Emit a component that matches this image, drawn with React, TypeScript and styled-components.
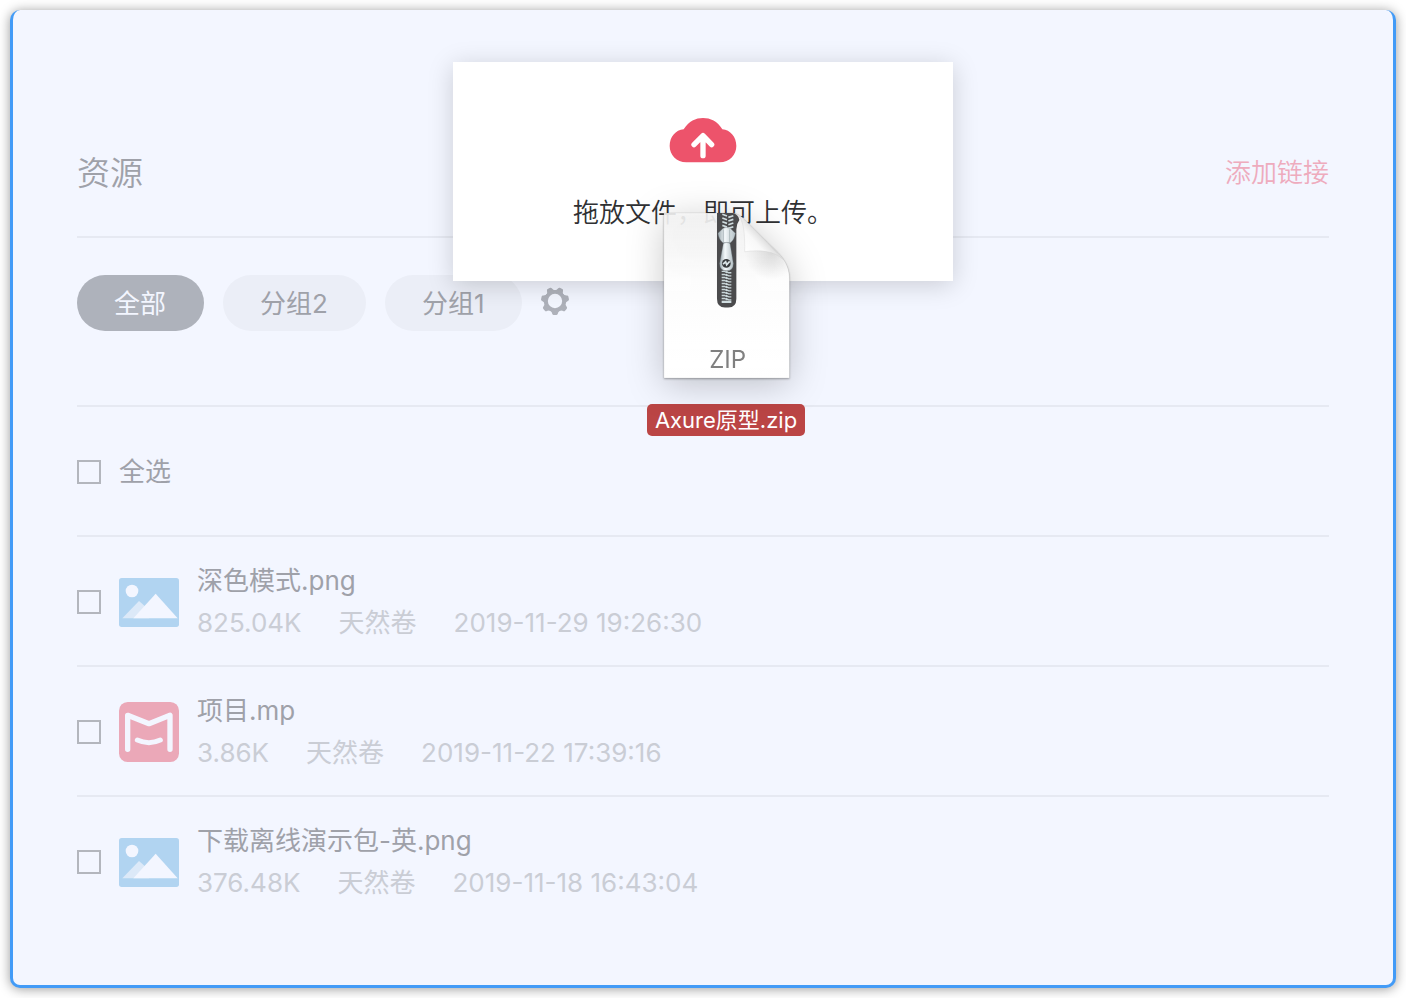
import React from "react";
import styled, { createGlobalStyle } from "styled-components";

const GlobalStyle = createGlobalStyle`
  * { box-sizing: border-box; }
  body {
    margin: 0;
    background: #fff;
    font-family: Inter, "Noto Sans CJK SC", sans-serif;
    font-size: 26px;
    font-weight: 400;
    color: #9fa1a9;
  }
`;

const Page = styled.div`
  padding: 10px;
`;

const DropZone = styled.main`
  position: relative;
  min-height: calc(100vh - 20px);
  padding: 0 64px 40px;
  background: #f3f6ff;
  border: 3px solid #429bf7;
  border-top: 0;
  border-radius: 10px;
  box-shadow: 0 1px 12px rgba(0, 0, 0, 0.4);
`;

const Header = styled.header`
  display: flex;
  align-items: center;
  justify-content: space-between;
  padding: 139px 0 39px;
  border-bottom: 2px solid #e6e9f2;
`;

const Title = styled.h1`
  margin: 0;
  font-size: 33px;
  font-weight: 350;
  line-height: 48px;
`;

const AddLink = styled.a`
  color: #eeabbd;
  font-weight: 350;
  line-height: 48px;
  text-decoration: none;
`;

const Groups = styled.nav`
  display: flex;
  align-items: center;
  gap: 19px;
  padding: 37px 0 74px;
  border-bottom: 2px solid #e6e9f2;
`;

const GroupButton = styled.button<{ $active?: boolean }>`
  height: 56px;
  padding: 0 38px 4px 37px;
  border: 0;
  border-radius: 28px;
  background: ${(p) => (p.$active ? "#aeb2bb" : "#ebeef7")};
  color: ${(p) => (p.$active ? "#f3f6ff" : "#9fa1a9")};
  font: inherit;
`;

const GearButton = styled.button`
  display: flex;
  padding: 0 0 4px;
  border: 0;
  background: none;
`;

const Row = styled.div`
  display: flex;
  align-items: center;
  gap: 18px;
  height: 130px;
  padding-top: 2px;
  border-bottom: 2px solid #e6e9f2;
`;

const List = styled.ul`
  margin: 0;
  padding: 0;
  list-style: none;
`;

const FileRow = styled(Row)`
  &:last-child {
    border-bottom-color: transparent;
  }
`;

const Check = styled.input`
  appearance: none;
  flex: none;
  width: 24px;
  height: 24px;
  margin: 0;
  border: 2px solid #b3b6bd;
  background: transparent;
`;

const CheckLabel = styled.label`
  line-height: 42px;
`;

const FileText = styled.div`
  line-height: 42px;
`;

const FileName = styled.label`
  display: block;
`;

const Meta = styled.div`
  display: flex;
  gap: 37px;
  color: #cacdd5;
`;

const Icon = styled.svg`
  display: block;
  flex: none;
  overflow: visible;
`;

const Dialog = styled.section`
  position: absolute;
  top: 52px;
  left: calc(50% - 250px);
  width: 500px;
  padding: 56px 20px 47px;
  display: flex;
  flex-direction: column;
  align-items: center;
  gap: 29px;
  background: #fff;
  box-shadow: 0 4px 24px rgba(0, 0, 0, 0.17);
`;

const DialogText = styled.p`
  margin: 0;
  color: #303133;
  font-weight: 350;
  line-height: 42px;
`;

const Dragged = styled.div`
  position: absolute;
  top: 203px;
  left: calc(50% - 56px);
  width: 158px;
  display: flex;
  flex-direction: column;
  align-items: center;
  gap: 26px;
`;

const ZipDrawing = styled(Icon)`
  filter: drop-shadow(0 1px 1px rgba(0, 0, 0, 0.3)) drop-shadow(0 6px 18px rgba(0, 0, 0, 0.22));
`;

const DraggedName = styled.span`
  width: 158px;
  border-radius: 5px;
  background: #bb4545;
  color: #fff;
  font-size: 22px;
  line-height: 32px;
  text-align: center;
  white-space: nowrap;
`;

const CloudIcon = () => (
  <Icon width="68" height="45" viewBox="0 0 204 135" aria-hidden="true">
    <path d="M52 133C22 133 2 111 2 84C2 57 20 36 44 34C60 9 80 0 102 0C124 0 145 9 160 34C184 36 202 57 202 84C202 111 182 133 152 133Z" fill="#ed536b" />
    <path
      d="M102 113V54M75 80L102 53L128 80"
      fill="none"
      stroke="#fff"
      strokeWidth="16"
      strokeLinecap="round"
      strokeLinejoin="round"
    />
  </Icon>
);

const gearTeeth = [0, 1, 2, 3, 4, 5, 6].map((i) => 90 + (i * 360) / 7);

const GearIcon = () => (
  <Icon width="28" height="28" viewBox="-42 -42 84 84" aria-hidden="true">
    <circle r="27" fill="none" stroke="#aeb1ba" strokeWidth="11" />
    {gearTeeth.map((a) => (
      <path
        key={a}
        d="M26 -17Q33 -8 39 -8Q42 -7 42 -4V4Q42 7 39 8Q33 8 26 17Z"
        fill="#aeb1ba"
        transform={`rotate(${a})`}
      />
    ))}
  </Icon>
);

const ImageIcon = () => (
  <Icon width="60" height="49" viewBox="0 0 180 147" aria-hidden="true">
    <rect width="180" height="147" rx="8" fill="#b1d4f1" />
    <circle cx="39" cy="39" r="19" fill="#f3f6ff" />
    <path d="M10 121L60 69L90 95V121Z" fill="#dce9f8" />
    <path d="M43 121L110 47L176 121Z" fill="#f3f6ff" />
  </Icon>
);

const MockIcon = () => (
  <Icon width="60" height="60" viewBox="0 0 180 180" aria-hidden="true">
    <rect width="180" height="180" rx="26" fill="#eba8b8" />
    <path
      d="M26 142V40L90 65L153 40V142"
      fill="none"
      stroke="#f3f6ff"
      strokeWidth="16"
      strokeLinecap="round"
      strokeLinejoin="round"
    />
    <path d="M55 114Q90 130 124 114" fill="none" stroke="#f3f6ff" strokeWidth="15" strokeLinecap="round" />
  </Icon>
);

const lowerTeeth = Array.from({ length: 10 }, (_, i) => 246 + i * 9);
const upperTeeth = [78, 89, 100, 111];

const ZipIcon = () => (
  <ZipDrawing width="126" height="165" viewBox="71 71 376 494" role="img" aria-label="ZIP">
    <defs>
      <linearGradient id="paper" x1="0" y1="0" x2="0" y2="1">
        <stop offset="0" stopColor="#fafafa" stopOpacity="0.88" />
        <stop offset="0.4" stopColor="#fefefe" stopOpacity="0.98" />
        <stop offset="1" stopColor="#ffffff" />
      </linearGradient>
      <linearGradient id="curl" x1="315" y1="187" x2="368" y2="138" gradientUnits="userSpaceOnUse">
        <stop offset="0" stopColor="#ffffff" />
        <stop offset="0.6" stopColor="#f8f8f8" />
        <stop offset="1" stopColor="#dcdcdc" />
      </linearGradient>
      <radialGradient id="shade" cx="395" cy="190" r="80" gradientUnits="userSpaceOnUse">
        <stop offset="0" stopColor="#000" stopOpacity="0.12" />
        <stop offset="1" stopColor="#000" stopOpacity="0" />
      </radialGradient>
      <linearGradient id="metal" x1="0" y1="0" x2="1" y2="0">
        <stop offset="0" stopColor="#9aa8ae" />
        <stop offset="0.4" stopColor="#f4f9fb" />
        <stop offset="1" stopColor="#b4c0c5" />
      </linearGradient>
    </defs>
    <path
      d="M73 71H278C298 73 310 86 325 102L415 190C440 216 449 240 449 272V565H73Z"
      fill="url(#paper)"
      stroke="#000"
      strokeOpacity="0.1"
      strokeWidth="2"
    />
    <path d="M290 90L325 102L415 190C440 216 449 240 449 272V290H280Z" fill="url(#shade)" />
    <path
      d="M284 72C306 80 316 105 315 187C365 180 405 186 430 210L325 102C310 86 300 76 284 72Z"
      fill="url(#curl)"
      stroke="#c8c8c8"
      strokeWidth="1"
    />
    <path d="M232 71H280Q296 76 299 92Q290 104 290 120V328Q290 354 266 354H256Q232 354 232 328Z" fill="#4b4b4d" />
    {upperTeeth.map((y) => (
      <path
        key={y}
        d={`M248 ${y - 3}L262 ${y + 2}M266 ${y + 6}L281 ${y + 1}`}
        fill="none"
        stroke="#d0dde0"
        strokeWidth="5"
      />
    ))}
    {lowerTeeth.map((y) => (
      <path
        key={y}
        d={`M246 ${y}H255L263 ${y + 4}M275 ${y + 4}H267L260 ${y}`}
        fill="none"
        stroke="#c9d6d9"
        strokeWidth="4"
      />
    ))}
    <path d="M246 337H275" stroke="#d0dde0" strokeWidth="7" />
    <path
      d="M249 118Q261 110 273 118L287 132Q284 152 272 160H250Q238 152 235 132Z"
      fill="url(#metal)"
      stroke="#788388"
      strokeWidth="1"
    />
    <path d="M251 120V160M270 120V160" stroke="#98a5aa" strokeWidth="2" />
    <path
      d="M251 162Q261 156 271 162L281 222Q281 244 261 244Q240 244 240 222Z"
      fill="url(#metal)"
      stroke="#68747a"
      strokeWidth="1"
    />
    <circle cx="260" cy="222" r="13" fill="#363a3c" />
    <path d="M250 224L258 217L261 226L270 216" fill="none" stroke="#dbe5e8" strokeWidth="5" />
    <text x="264" y="535" textAnchor="middle" fontFamily="Inter, sans-serif" fontSize="72" fill="#808080">
      ZIP
    </text>
  </ZipDrawing>
);

type FileItem = {
  id: string;
  name: string;
  size: string;
  owner: string;
  time: string;
  kind: "image" | "mock";
};

const files: FileItem[] = [
  { id: "f1", name: "深色模式.png", size: "825.04K", owner: "天然卷", time: "2019-11-29 19:26:30", kind: "image" },
  { id: "f2", name: "项目.mp", size: "3.86K", owner: "天然卷", time: "2019-11-22 17:39:16", kind: "mock" },
  { id: "f3", name: "下载离线演示包-英.png", size: "376.48K", owner: "天然卷", time: "2019-11-18 16:43:04", kind: "image" },
];

export default function App() {
  return (
    <Page>
      <GlobalStyle />
      <DropZone>
        <Header>
          <Title>资源</Title>
          <AddLink href="#add">添加链接</AddLink>
        </Header>
        <Groups>
          <GroupButton $active>全部</GroupButton>
          <GroupButton>分组2</GroupButton>
          <GroupButton>分组1</GroupButton>
          <GearButton aria-label="设置">
            <GearIcon />
          </GearButton>
        </Groups>
        <Row>
          <Check type="checkbox" id="all" />
          <CheckLabel htmlFor="all">全选</CheckLabel>
        </Row>
        <List>
          {files.map((f) => (
            <FileRow as="li" key={f.id}>
              <Check type="checkbox" id={f.id} />
              {f.kind === "image" ? <ImageIcon /> : <MockIcon />}
              <FileText>
                <FileName htmlFor={f.id}>{f.name}</FileName>
                <Meta>
                  <span>{f.size}</span>
                  <span>{f.owner}</span>
                  <span>{f.time}</span>
                </Meta>
              </FileText>
            </FileRow>
          ))}
        </List>
        <Dialog>
          <CloudIcon />
          <DialogText>拖放文件，即可上传。</DialogText>
        </Dialog>
        <Dragged>
          <ZipIcon />
          <DraggedName>Axure原型.zip</DraggedName>
        </Dragged>
      </DropZone>
    </Page>
  );
}
